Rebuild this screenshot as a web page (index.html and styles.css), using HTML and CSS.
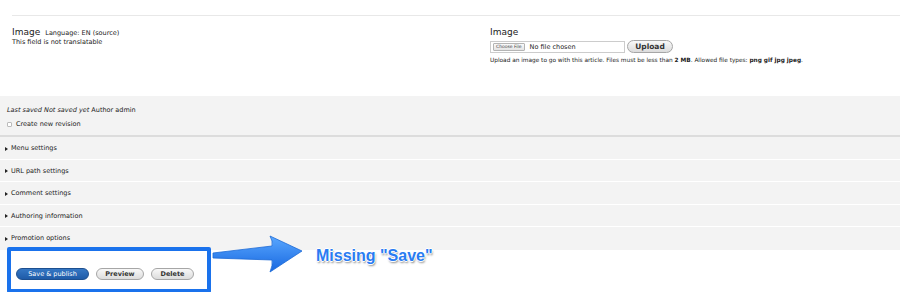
FILE: index.html
```html
<!DOCTYPE html>
<html lang="en">
<head>
  <meta charset="UTF-8">
  <title>Edit Article</title>
  <link rel="stylesheet" href="styles.css">
</head>
<body>
  <div class="page">
    <div class="rule"></div>

    <div class="fields">
      <div class="field">
        <div class="field-head">
          <span class="field-title">Image</span>
          <span class="lang">Language: EN (source)</span>
        </div>
        <div class="note">This field is not translatable</div>
      </div>

      <div class="field field-upload">
        <div class="field-title">Image</div>
        <div class="upload-row">
          <div class="file-input"><span class="choose">Choose File</span>No file chosen</div>
          <button class="btn btn-upload">Upload</button>
        </div>
        <div class="description">Upload an image to go with this article. Files must be less than <b>2 MB</b>. Allowed file types: <b>png gif jpg jpeg</b>.</div>
      </div>
    </div>

    <div class="panel">
      <div class="meta">
        <div class="meta-line"><em>Last saved</em> <em>Not saved yet</em> Author admin</div>
        <label class="revision"><span class="checkbox"></span>Create new revision</label>
      </div>
      <div class="details">
        <div class="detail">Menu settings</div>
        <div class="detail">URL path settings</div>
        <div class="detail">Comment settings</div>
        <div class="detail">Authoring information</div>
        <div class="detail">Promotion options</div>
      </div>
    </div>

    <div class="actions">
      <div class="highlight">
        <button class="btn btn-primary">Save &amp; publish</button>
        <button class="btn">Preview</button>
        <button class="btn">Delete</button>
      </div>

      <!-- annotation drawn over the form -->
      <div class="callout">
        <svg class="arrow" width="92" height="40" viewBox="0 0 92 40">
          <defs>
            <linearGradient id="arrowFill" x1="0" y1="0" x2="0" y2="1">
              <stop offset="0" stop-color="#5aa8ff"/>
              <stop offset="1" stop-color="#1767e0"/>
            </linearGradient>
          </defs>
          <path d="M1 18 L60 11 Q61 6 58 1 L90 16 L58 37 Q61 30 60 25 L1 23 Z" fill="url(#arrowFill)" stroke="#1c6ad6" stroke-width="0.8" stroke-linejoin="round"/>
        </svg>
        <span class="callout-text">Missing "Save"</span>
      </div>
    </div>
  </div>
</body>
</html>
```

FILE: styles.css
```css
:root {
  --text: #222;
  --panel: #f3f3f3;
  --line: #dcdcdc;
  --blue: #1a72ec;
}

* {
  margin: 0;
  padding: 0;
  box-sizing: border-box;
}

body {
  font-family: "DejaVu Sans", sans-serif;
  font-size: 6.5px;
  color: var(--text);
  background: #fff;
  width: 900px;
  height: 292px;
  overflow: hidden;
}

.rule {
  margin: 15px 0 0 12px;
  border-top: 1px solid #e8e8e8;
}

.fields {
  display: flex;
  padding-left: 12px;
  margin-top: 10px;
  height: 70px;
}

.field {
  width: 478px;
}

.field-upload {
  width: auto;
}

.field-title {
  font-size: 9px;
  line-height: 12px;
}

.lang {
  margin-left: 3px;
}

.note {
  line-height: 9px;
}

.upload-row {
  display: flex;
  align-items: center;
  gap: 2px;
  margin-top: 2px;
}

.file-input {
  display: flex;
  align-items: center;
  width: 135px;
  height: 12px;
  border: 1px solid #ccc;
  background: #fff;
  padding-left: 2px;
}

.choose {
  font-size: 4.5px;
  border: 1px solid #b4b4b4;
  border-radius: 1px;
  background: linear-gradient(#fafafa, #e4e4e4);
  padding: 0 2px;
  line-height: 6px;
  margin-right: 5px;
  color: #444;
}

.description {
  font-size: 5.8px;
  margin-top: 4px;
}

.btn {
  font-family: inherit;
  font-size: 6.5px;
  font-weight: bold;
  color: #333;
  height: 12px;
  padding: 0 10px;
  border: 1px solid #a6a6a6;
  border-radius: 7px;
  background: linear-gradient(#f8f8f8, #dcdcdc);
}

.btn-upload {
  font-size: 7.5px;
  height: 13px;
  width: 46px;
  padding: 0;
}

.panel {
  background: var(--panel);
}

.meta {
  padding: 10px 7px 0;
  height: 41px;
  border-bottom: 2px solid var(--line);
}

.meta-line {
  line-height: 8px;
}

.revision {
  display: flex;
  align-items: center;
  margin-top: 6px;
  line-height: 8px;
}

.checkbox {
  width: 5px;
  height: 5px;
  border: 1px solid #bbb;
  border-radius: 1px;
  background: #fff;
  margin: 1px 4px 0 0;
}

.detail {
  height: 22.5px;
  line-height: 21.5px;
  padding: 1px 0 0 11px;
  border-bottom: 1px solid #fff;
  position: relative;
}

.detail::before {
  content: "";
  position: absolute;
  left: 5px;
  top: 9.5px;
  border-left: 3.5px solid #222;
  border-top: 2.5px solid transparent;
  border-bottom: 2.5px solid transparent;
}

.details .detail:last-child {
  border-bottom: none;
}

.actions {
  position: relative;
  margin-top: -3px;
}

.highlight {
  display: flex;
  gap: 7px;
  width: 204px;
  height: 46px;
  margin-left: 7px;
  border: 4px solid var(--blue);
  border-radius: 2px;
  background: #fff;
  padding: 17px 0 0 5px;
}

.highlight .btn {
  height: 12px;
}

.btn-primary {
  color: #fff;
  width: 73px;
  padding: 0;
  border-color: #1d4f8f;
  background: linear-gradient(#3577c4, #1f5ba8);
  font-weight: normal;
}

.highlight .btn:nth-child(2) {
  width: 48px;
  padding: 0;
}

.highlight .btn:nth-child(3) {
  width: 43px;
  padding: 0;
}

.callout {
  position: absolute;
  left: 212px;
  top: -12px;
  display: flex;
  align-items: center;
}

.callout-text {
  font-family: "Liberation Sans", Arial, sans-serif;
  font-weight: bold;
  font-size: 16px;
  color: #2a7cf2;
  margin: 3px 0 0 12px;
  text-shadow:
    1px 0 0 #fff, -1px 0 0 #fff, 0 1px 0 #fff, 0 -1px 0 #fff,
    1px 2px 2px rgba(0, 0, 0, 0.45);
}
```
